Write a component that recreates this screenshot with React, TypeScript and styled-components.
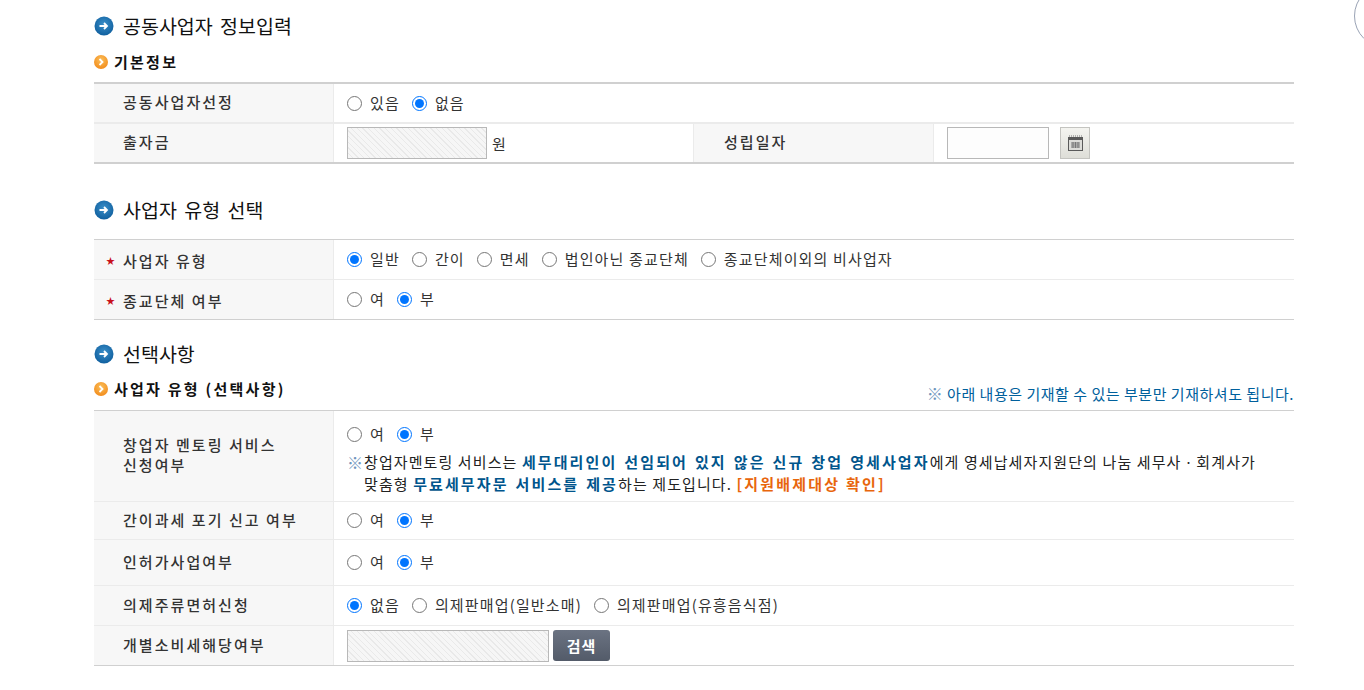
import styled, { createGlobalStyle } from "styled-components";

const GlobalStyle = createGlobalStyle`
  html, body {
    margin: 0;
    padding: 0;
    background: #fff;
    overflow: hidden;
  }
  body {
    font-family: "Noto Sans CJK KR", "Noto Sans", sans-serif;
    color: #333;
  }
`;

//ICONS
const BlueBullet = () => (
  <svg width="20" height="20" viewBox="0 0 20 20">
    <defs>
      <radialGradient id="blueBall" cx="50%" cy="40%" r="60%">
        <stop offset="0%" stopColor="#3b8fc9" />
        <stop offset="100%" stopColor="#10609f" />
      </radialGradient>
    </defs>
    <circle cx="10" cy="10" r="9.5" fill="url(#blueBall)" />
    <path d="M5.5 10h7M10 7l3 3-3 3" fill="none" stroke="#fff" strokeWidth="1.8" />
  </svg>
);

const OrangeBullet = () => (
  <svg width="14" height="14" viewBox="0 0 14 14">
    <defs>
      <radialGradient id="orangeBall" cx="50%" cy="35%" r="65%">
        <stop offset="0%" stopColor="#fbbf5a" />
        <stop offset="100%" stopColor="#f28c1c" />
      </radialGradient>
    </defs>
    <circle cx="7" cy="7" r="7" fill="url(#orangeBall)" />
    <path d="M5.5 4l3 3-3 3" fill="none" stroke="#fff" strokeWidth="1.8" />
  </svg>
);

const CalendarIcon = () => (
  <svg width="15" height="16" viewBox="0 0 15 16">
    <path d="M1 1h13" stroke="#777" strokeWidth="1" strokeDasharray="1 1" />
    <rect x="0.5" y="2.5" width="14" height="13" fill="#dcdcd8" stroke="#5a5a5a" />
    <rect x="1" y="3" width="13" height="2" fill="#5a5a5a" />
    <path d="M3 8h9M3 10h9M3 12h9M5 7v6M7.5 7v6M10 7v6" stroke="#777" strokeWidth="1" />
  </svg>
);

//PARTS
const Radio = (props: { label: string; checked?: boolean }) => (
  <RadioLabel>
    <input type="radio" readOnly checked={!!props.checked} />
    {props.label}
  </RadioLabel>
);

const Required = () => <Star>★</Star>;

//REACT
const App = () => {
  return (
    <Page>
      <GlobalStyle />
      <CornerArc />

      <Title $top={15}>
        <BlueBullet />
        공동사업자 정보입력
      </Title>
      <SubTitle $top={17}>
        <OrangeBullet />
        기본정보
      </SubTitle>
      <Table $edge={2} $top={12}>
        <Row $h={38} $line={2}>
          <Label>공동사업자선정</Label>
          <Value>
            <Radio label="있음" />
            <Radio label="없음" checked />
          </Value>
        </Row>
        <Row $h={38} $last>
          <Label>출자금</Label>
          <Value $w={360}>
            <HatchedInput $w={140} />
            <Unit>원</Unit>
          </Value>
          <Label $inset={30}>성립일자</Label>
          <Value>
            <DateInput />
            <CalendarButton>
              <CalendarIcon />
            </CalendarButton>
          </Value>
        </Row>
      </Table>

      <Title $top={35}>
        <BlueBullet />
        사업자 유형 선택
      </Title>
      <Table $edge={1} $top={18}>
        <Row $h={39} $line={1}>
          <Label $drop>
            <Required />
            사업자 유형
          </Label>
          <Value>
            <Radio label="일반" checked />
            <Radio label="간이" />
            <Radio label="면세" />
            <Radio label="법인아닌 종교단체" />
            <Radio label="종교단체이외의 비사업자" />
          </Value>
        </Row>
        <Row $h={39} $last>
          <Label $drop>
            <Required />
            종교단체 여부
          </Label>
          <Value>
            <Radio label="여" />
            <Radio label="부" checked />
          </Value>
        </Row>
      </Table>

      <Title $top={23}>
        <BlueBullet />
        선택사항
      </Title>
      <SubHeader>
        <SubTitle $top={0}>
          <OrangeBullet />
          사업자 유형 (선택사항)
        </SubTitle>
        <TopNote>
          <NoteMark>※</NoteMark> 아래 내용은 기재할 수 있는 부분만 기재하셔도 됩니다.
        </TopNote>
      </SubHeader>
      <Table $edge={1} $top={0}>
        <Row $h={90} $line={1}>
          <Label>
            창업자 멘토링 서비스
            <br />
            신청여부
          </Label>
          <MentorValue>
            <RadioLine>
              <Radio label="여" />
              <Radio label="부" checked />
            </RadioLine>
            <Notice>
              <NoticeMark>※</NoticeMark>
              <span>
                창업자멘토링 서비스는 <Strong>세무대리인이 선임되어 있지 않은 신규 창업 영세사업자</Strong>
                에게 영세납세자지원단의 나눔 세무사ㆍ회계사가
                <br />
                맞춤형 <Strong>무료세무자문 서비스를 제공</Strong>하는 제도입니다.{" "}
                <Warning>[지원배제대상 확인]</Warning>
              </span>
            </Notice>
          </MentorValue>
        </Row>
        <Row $h={37} $line={1}>
          <Label>간이과세 포기 신고 여부</Label>
          <Value>
            <Radio label="여" />
            <Radio label="부" checked />
          </Value>
        </Row>
        <Row $h={45} $line={1}>
          <Label>인허가사업여부</Label>
          <Value>
            <Radio label="여" />
            <Radio label="부" checked />
          </Value>
        </Row>
        <Row $h={39} $line={1}>
          <Label>의제주류면허신청</Label>
          <Value>
            <Radio label="없음" checked />
            <Radio label="의제판매업(일반소매)" />
            <Radio label="의제판매업(유흥음식점)" />
          </Value>
        </Row>
        <Row $h={39} $last>
          <Label>개별소비세해당여부</Label>
          <Value>
            <HatchedInput $w={202} />
            <SearchButton>검색</SearchButton>
          </Value>
        </Row>
      </Table>
    </Page>
  );
};

//STYLED-COMPONENTS
const Page = styled.div`
  position: relative;
  width: 1364px;
  height: 690px;
  overflow: hidden;
  padding-left: 94px;
  box-sizing: border-box;
  display: flow-root;
`;

const CornerArc = styled.div`
  position: absolute;
  left: 1354px;
  top: -16px;
  width: 62px;
  height: 62px;
  border: 1px solid #9aa3b5;
  border-radius: 50%;
`;

const Title = styled.h2<{ $top: number }>`
  display: flex;
  align-items: center;
  gap: 9px;
  height: 22px;
  margin: ${(p) => p.$top}px 0 0;
  font-size: 19.5px;
  font-weight: 400;
  word-spacing: 3px;
  line-height: 22px;
  color: #111;
  white-space: nowrap;
`;

const SubTitle = styled.h3<{ $top: number }>`
  display: flex;
  align-items: center;
  gap: 6px;
  height: 16px;
  margin: ${(p) => p.$top}px 0 0;
  font-size: 15px;
  font-weight: 700;
  letter-spacing: 2.25px;
  line-height: 16px;
  color: #111;
  white-space: nowrap;
`;

const SubHeader = styled.div`
  display: flex;
  justify-content: space-between;
  align-items: flex-start;
  width: 1200px;
  height: 29px;
  margin-top: 16px;
`;

const TopNote = styled.div`
  margin-top: 4px;
  font-size: 15px;
  line-height: 17px;
  letter-spacing: 0.52px;
  color: #00609c;
  white-space: nowrap;
`;

const NoteMark = styled.span`
  font-size: 16px;
  color: #6f96bd;
`;

const Table = styled.div<{ $edge: number; $top: number }>`
  width: 1200px;
  margin-top: ${(p) => p.$top}px;
  border-top: ${(p) => p.$edge}px solid #d0d0d0;
  border-bottom: ${(p) => p.$edge}px solid #d0d0d0;
`;

const Row = styled.div<{ $h: number; $line?: number; $last?: boolean }>`
  display: flex;
  height: ${(p) => p.$h}px;
  border-bottom: ${(p) => (p.$last ? 0 : `${p.$line}px solid #ebebeb`)};
`;

const Label = styled.div<{ $inset?: number; $drop?: boolean }>`
  position: relative;
  flex: 0 0 240px;
  box-sizing: border-box;
  display: flex;
  flex-wrap: wrap;
  align-content: center;
  align-items: center;
  padding: ${(p) => (p.$drop ? "3px 0 0" : "0 0 2px")} ${(p) => p.$inset ?? 29}px;
  padding-right: 0;
  background: #f7f7f7;
  border-right: 1px solid #ebebeb;
  font-size: 15px;
  font-weight: 500;
  letter-spacing: 2.05px;
  line-height: 20px;
  color: #333;
  white-space: nowrap;

  br {
    flex-basis: 100%;
  }
`;

const Star = styled.span`
  position: absolute;
  left: 12px;
  font-size: 9px;
  letter-spacing: 0;
  color: #c8101c;
`;

const Value = styled.div<{ $w?: number }>`
  ${(p) => (p.$w ? `flex: 0 0 ${p.$w}px; border-right: 1px solid #ebebeb;` : "flex: 1;")}
  box-sizing: border-box;
  display: flex;
  align-items: center;
  padding-left: 13px;
`;

const MentorValue = styled.div`
  flex: 1;
  box-sizing: border-box;
  display: flex;
  flex-direction: column;
  padding: 13px 0 0 13px;
`;

const RadioLine = styled.div`
  display: flex;
  align-items: center;
  height: 20px;
`;

const RadioLabel = styled.label`
  display: inline-flex;
  align-items: center;
  gap: 8px;
  margin-right: 12px;
  padding-bottom: 2px;
  font-size: 15px;
  letter-spacing: 1.15px;
  color: #333;
  white-space: nowrap;

  input {
    width: 15px;
    height: 15px;
    margin: 2px 0 0;
  }
`;

const Notice = styled.div`
  display: flex;
  margin-top: 7px;
  font-size: 15px;
  line-height: 22px;
  letter-spacing: 1.1px;
  color: #222;
  white-space: nowrap;
`;

const NoticeMark = styled.span`
  flex: 0 0 17px;
  font-size: 16px;
  color: #6f96bd;
  letter-spacing: 0;
`;

const Strong = styled.strong`
  font-weight: 700;
  letter-spacing: 2.1px;
  word-spacing: 1.5px;
  color: #00558c;
`;

const Warning = styled.strong`
  font-weight: 700;
  letter-spacing: 2.2px;
  color: #e8660c;
`;

const HatchedInput = styled.div<{ $w: number }>`
  box-sizing: border-box;
  width: ${(p) => p.$w}px;
  height: 32px;
  border: 1px solid #b8b8b8;
  background: repeating-linear-gradient(45deg, #f6f6f6 0 3px, #e9e9e9 3px 4px);
`;

const Unit = styled.span`
  margin-left: 5px;
  font-size: 15px;
  color: #333;
`;

const DateInput = styled.div`
  box-sizing: border-box;
  width: 102px;
  height: 32px;
  border: 1px solid #b8b8b8;
  background: #fdfdfd;
`;

const CalendarButton = styled.button`
  box-sizing: border-box;
  display: flex;
  align-items: center;
  justify-content: center;
  width: 30px;
  height: 32px;
  margin-left: 11px;
  padding: 0;
  border: 1px solid #c4c4c0;
  background: linear-gradient(#f4f4f0, #deded8);
`;

const SearchButton = styled.button`
  box-sizing: border-box;
  width: 57px;
  height: 31px;
  margin-left: 4px;
  padding: 0;
  border: 0;
  border-radius: 3px;
  background: linear-gradient(#6b7382, #535b69);
  font-family: inherit;
  font-size: 15px;
  font-weight: 700;
  letter-spacing: 1px;
  color: #fff;
`;

export default App;
